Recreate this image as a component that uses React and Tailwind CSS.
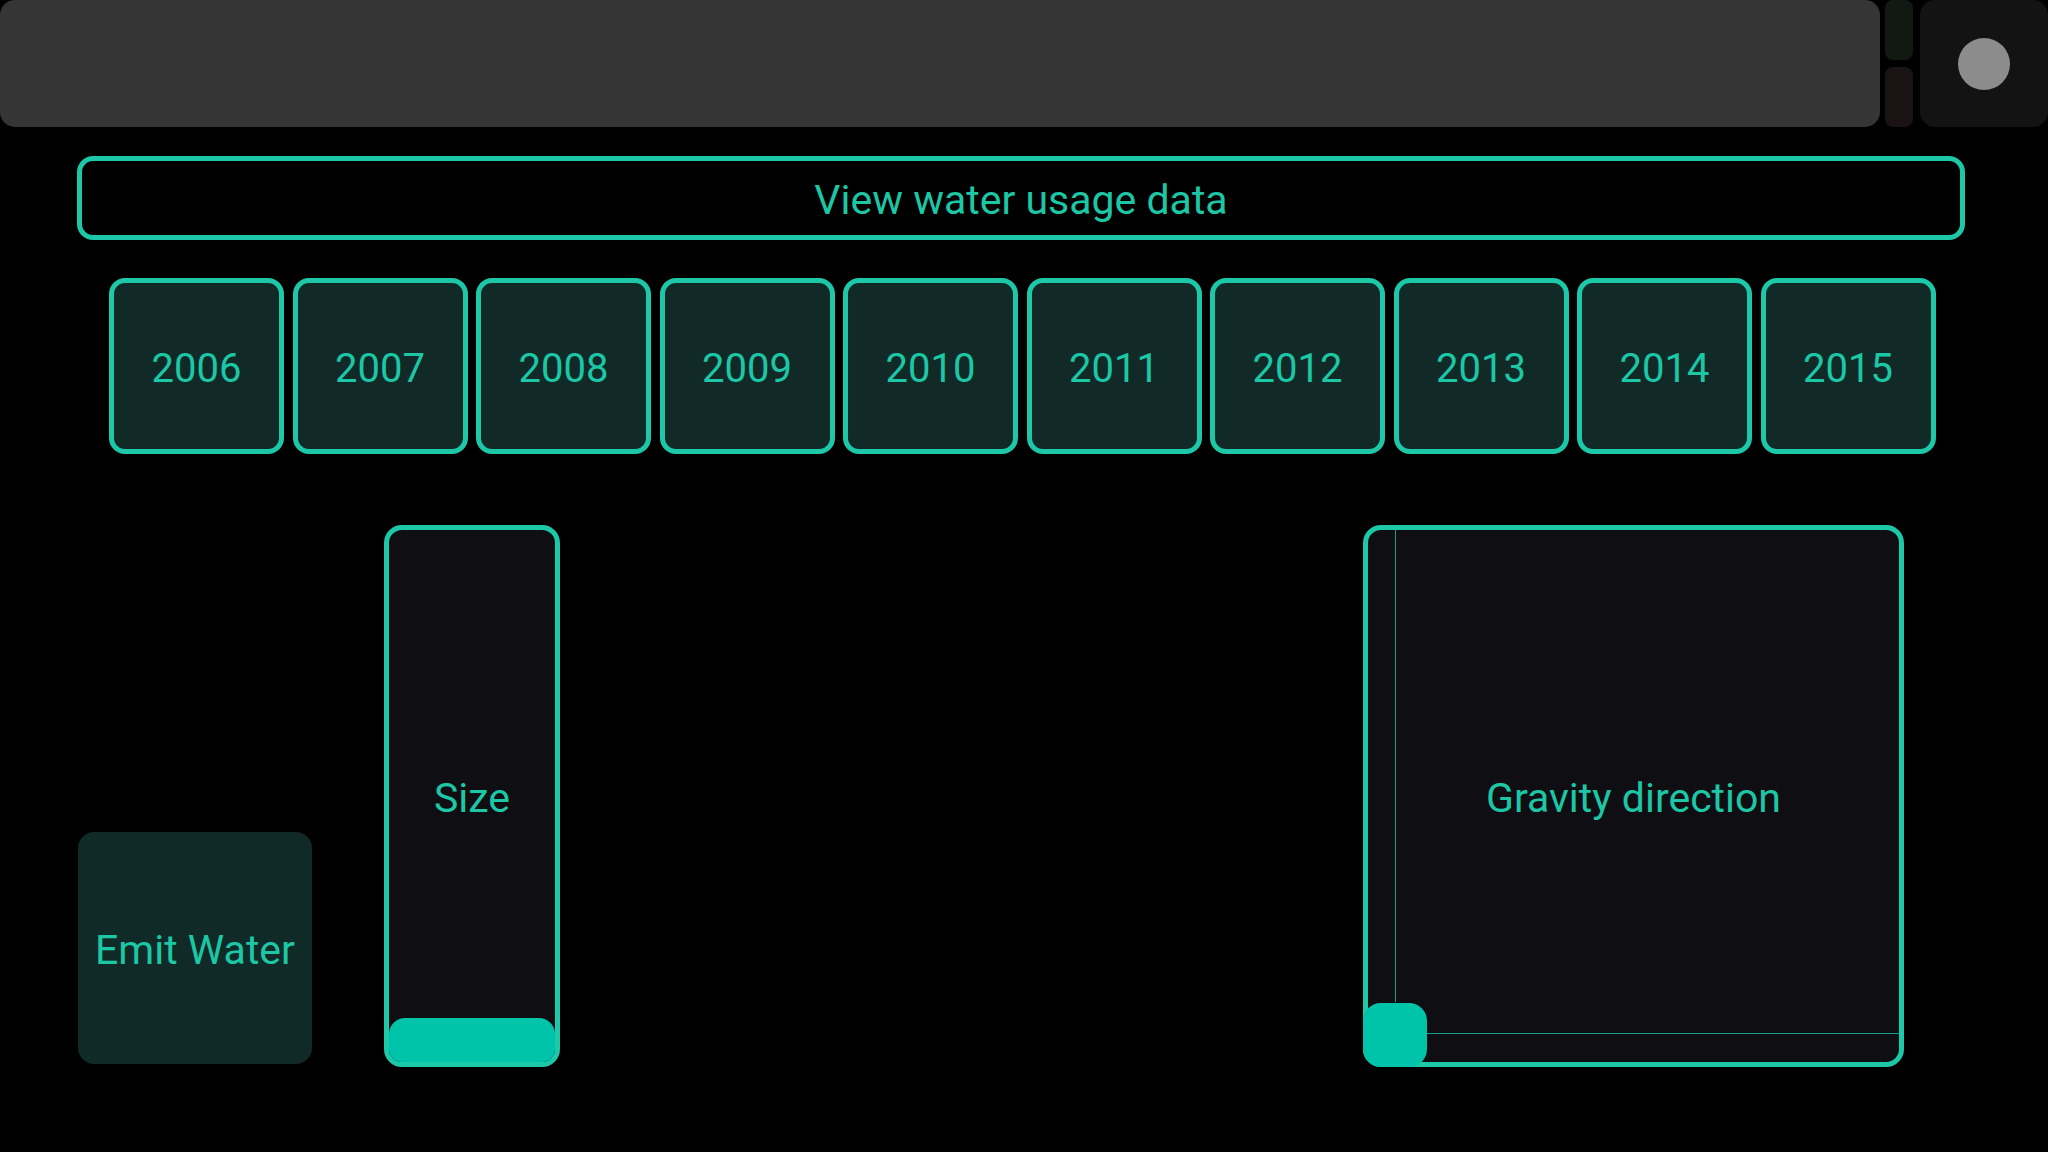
const years = ['2006', '2007', '2008', '2009', '2010', '2011', '2012', '2013', '2014', '2015'];

export default function App() {
  return (
    <div className="w-[2048px] h-[1152px] bg-black overflow-hidden flex flex-col text-[#1cc7a6]" style={{ fontFamily: 'Roboto, "Noto Sans", sans-serif' }}>
      {/* Top bar */}
      <div className="flex h-[127px] shrink-0">
        <div className="flex-1 bg-[#353535] rounded-[15px]" />
        <div className="w-[28px] ml-[5px] flex flex-col gap-[7px]">
          <div className="flex-1 bg-[#121812] rounded-[8px]" />
          <div className="flex-1 bg-[#1a1313] rounded-[8px]" />
        </div>
        <div className="w-[128px] ml-[7px] bg-[#131313] rounded-[15px] flex items-center justify-center">
          <div className="w-[52px] h-[52px] rounded-full bg-[#8c8c8c]" />
        </div>
      </div>

      {/* View data button */}
      <button className="shrink-0 mt-[29px] ml-[77px] w-[1888px] h-[84px] pt-[5px] border-[5px] border-[#1cc8a8] rounded-[16px] text-[41px] flex items-center justify-center">
        View water usage data
      </button>

      {/* Years */}
      <div className="shrink-0 mt-[38px] ml-[109px] flex gap-[8.5px]">
        {years.map(y => (
          <button key={y} className="w-[175px] h-[176px] pt-[5px] bg-[#112a28] border-[5px] border-[#1cc8a8] rounded-[16px] text-[40px] flex items-center justify-center">
            {y}
          </button>
        ))}
      </div>

      {/* Controls */}
      <div className="shrink-0 mt-[71px] flex items-start h-[542px]">
        <button className="ml-[78px] self-end mb-[3px] w-[234px] h-[232px] pt-[5px] bg-[#102a27] rounded-[16px] text-[41px] flex items-center justify-center">
          Emit Water
        </button>

        <div className="ml-[72px] relative w-[176px] h-[542px] pt-[5px] bg-[#0e0e13] border-[5px] border-[#1cc8a8] rounded-[18px] flex items-center justify-center text-[41px] overflow-hidden">
          Size
          <div className="absolute left-0 right-0 bottom-0 h-[44px] bg-[#00c4aa] rounded-t-[16px]" />
        </div>

        <div className="ml-[803px] relative w-[541px] h-[542px] pt-[5px] bg-[#0e0e13] border-[5px] border-[#1cc8a8] rounded-[18px] flex items-center justify-center text-[41px]">
          Gravity direction
          <div className="absolute top-0 left-[27px] bottom-[60px] w-px bg-[#169f88]" />
          <div className="absolute right-0 bottom-[28px] left-[59px] h-px bg-[#169f88]" />
          <div className="absolute left-[-5px] bottom-[-5px] w-[64px] h-[64px] bg-[#00c4aa] rounded-[18px]" />
        </div>
      </div>
    </div>
  );
}
